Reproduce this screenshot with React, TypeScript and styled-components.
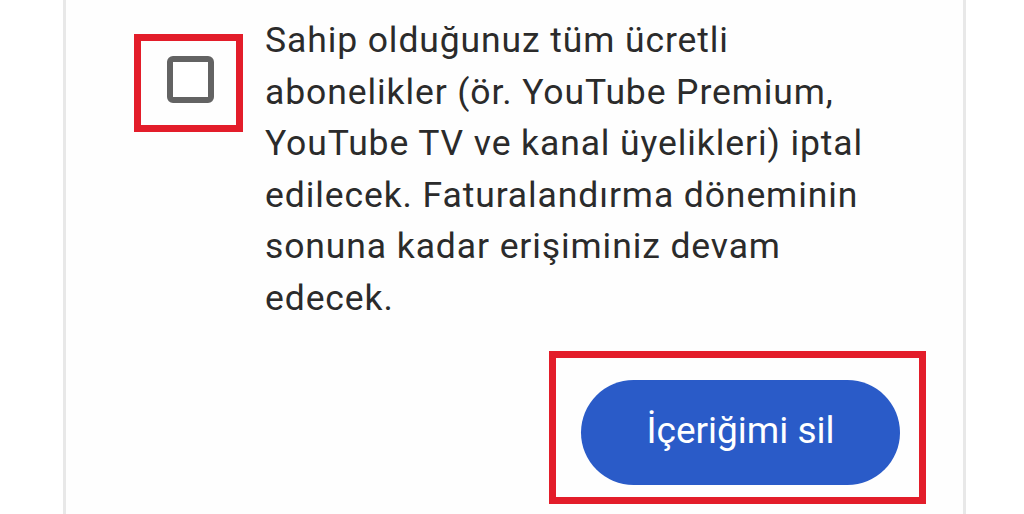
import React from "react";
import styled, { createGlobalStyle } from "styled-components";

const GlobalStyle = createGlobalStyle`
  html, body {
    margin: 0;
    padding: 0;
    background: #ffffff;
  }
  body {
    font-family: Roboto, "Liberation Sans", Arial, sans-serif;
    -webkit-font-smoothing: antialiased;
  }
`;

const Page = styled.div`
  width: 1024px;
  height: 514px;
  overflow: hidden;
  background: #ffffff;
  display: flex;
  padding-left: 63px;
  box-sizing: border-box;
`;

const Card = styled.section`
  width: 903px;
  height: 514px;
  box-sizing: border-box;
  border-left: 3px solid #e8e8e8;
  border-right: 3px solid #e8e8e8;
  background: #fefefe;
  display: flex;
  flex-direction: column;
`;

const OptionRow = styled.div`
  display: flex;
  align-items: flex-start;
  padding-left: 68px;
  gap: 22px;
`;

const Highlight = styled.div<{ $w: number; $h: number }>`
  box-sizing: border-box;
  width: ${(p) => p.$w}px;
  height: ${(p) => p.$h}px;
  border: 7px solid #e31d2a;
  flex-shrink: 0;
`;

const CheckHighlight = styled(Highlight)`
  margin-top: 34px;
  display: flex;
  align-items: center;
  justify-content: center;
  padding: 0 0 8px 4px;
`;

const CheckboxBox = styled.div`
  width: 47px;
  height: 47px;
  box-sizing: border-box;
  border: 6px solid #636363;
  border-radius: 6px;
  background: #ffffff;
`;

const Description = styled.p`
  margin: 15px 0 0 0;
  width: 610px;
  font-size: 35.5px;
  letter-spacing: 0.9px;
  line-height: 51.5px;
  color: #2b2b2b;
  font-weight: 400;
`;

const ActionRow = styled.div`
  display: flex;
  justify-content: flex-end;
  padding-right: 37px;
  margin-top: 27px;
`;

const ButtonHighlight = styled(Highlight)`
  padding: 22px 18px 12px 25px;
  display: flex;
`;

const PrimaryButton = styled.button`
  width: 319px;
  height: 105px;
  border: none;
  border-radius: 53px;
  background: #2a5bc8;
  color: #ffffff;
  font-family: Roboto, "Liberation Sans", Arial, sans-serif;
  font-size: 37px;
  font-weight: 400;
  display: flex;
  align-items: center;
  justify-content: center;
  padding: 0 0 4px 0;
  cursor: pointer;
`;

export default function App() {
  return (
    <>
      <GlobalStyle />
      <Page>
        <Card>
          <OptionRow>
            <CheckHighlight $w={109} $h={98}>
              <CheckboxBox role="checkbox" aria-checked="false" />
            </CheckHighlight>
            <Description>
              Sahip olduğunuz tüm ücretli abonelikler (ör. YouTube Premium,
              YouTube TV ve kanal üyelikleri) iptal edilecek. Faturalandırma
              döneminin sonuna kadar erişiminiz devam edecek.
            </Description>
          </OptionRow>
          <ActionRow>
            <ButtonHighlight $w={377} $h={153}>
              <PrimaryButton>İçeriğimi sil</PrimaryButton>
            </ButtonHighlight>
          </ActionRow>
        </Card>
      </Page>
    </>
  );
}
